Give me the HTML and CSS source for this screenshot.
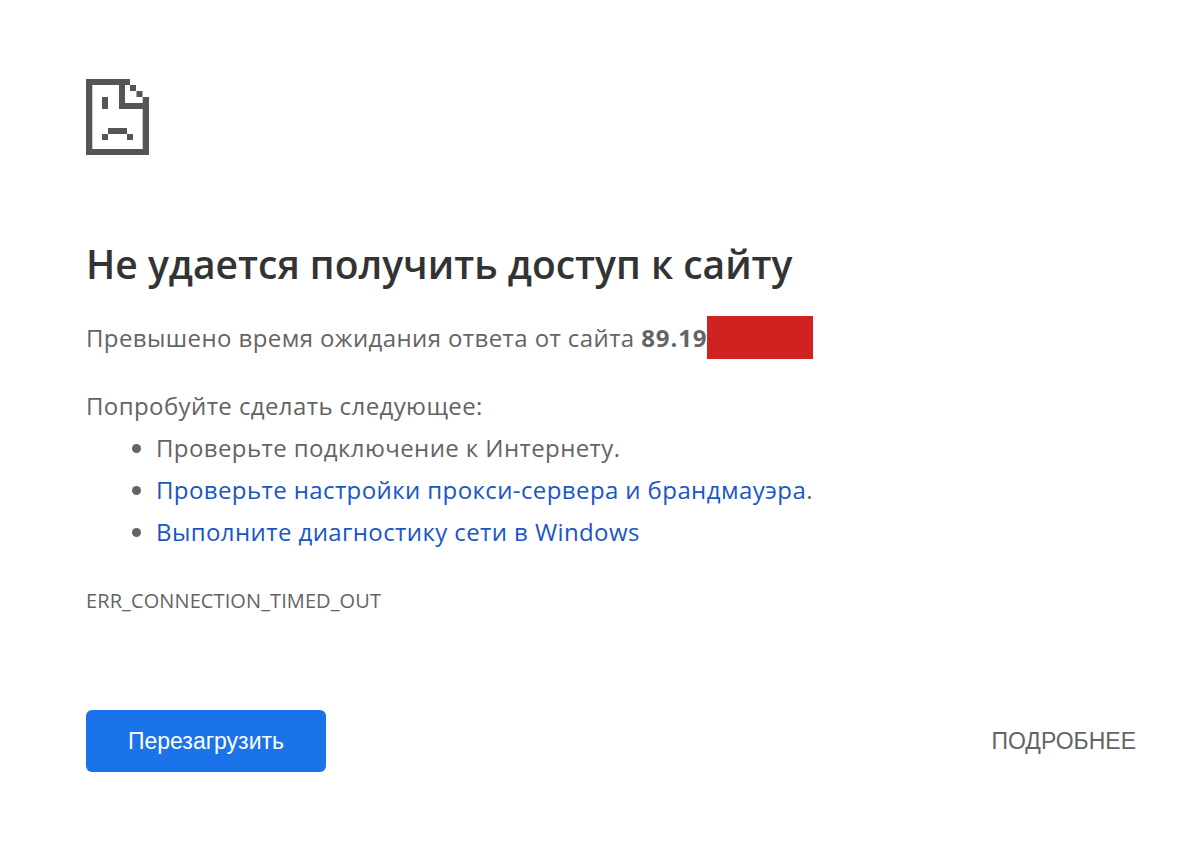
FILE: index.html
```html
<!DOCTYPE html>
<html lang="ru">
<head>
  <meta charset="UTF-8">
  <title>Не удается получить доступ к сайту</title>
  <link rel="stylesheet" href="styles.css">
</head>
<body>
  <div class="error-page">
    <svg class="sad-file" width="63" height="76" viewBox="0 0 63 76" fill="#555" aria-hidden="true">
      <path d="M0 0H44V6H6.300V70H56.700V18H63V76H0Z"/>
      <path d="M33 6H39V24H63V30H33Z"/>
      <rect x="44" y="6" width="6" height="6"/>
      <rect x="50.500" y="12" width="6" height="6"/>
      <rect x="16" y="18" width="6" height="12"/>
      <path d="M22 49H41V55H47V61H41V55H22V61H16V55H22Z"/>
    </svg>

    <h1 class="error-title">Не удается получить доступ к сайту</h1>

    <p class="error-summary">Превышено время ожидания ответа от сайта <strong>89.19</strong><span class="redacted"></span></p>

    <p class="suggest-intro">Попробуйте сделать следующее:</p>
    <ul class="suggest-list">
      <li>Проверьте подключение к Интернету.</li>
      <li><a href="#">Проверьте настройки прокси-сервера и брандмауэра</a>.</li>
      <li><a href="#">Выполните диагностику сети в Windows</a></li>
    </ul>

    <div class="error-code">ERR_CONNECTION_TIMED_OUT</div>

    <div class="button-row">
      <button type="button" class="reload-button">Перезагрузить</button>
      <button type="button" class="details-button">ПОДРОБНЕЕ</button>
    </div>
  </div>
</body>
</html>
```

FILE: styles.css
```css
body {
  margin: 0;
  background: #ffffff;
  color: #646464;
  font-family: "Open Sans", "Noto Sans", sans-serif;
  font-size: 24px;
  letter-spacing: 0.4px;
}

.error-page {
  padding: 79px 68px 0 86px;
}

.sad-file {
  display: block;
}

.error-title {
  margin: 78px 0 0;
  color: #333333;
  font-size: 39px;
  font-weight: 600;
  letter-spacing: 0;
  line-height: 62px;
}

.error-summary {
  margin: 21px 0 0;
  height: 43px;
  line-height: 43px;
}

.error-summary strong {
  font-weight: 700;
  letter-spacing: 0.9px;
}

.redacted {
  display: inline-block;
  width: 106px;
  height: 43px;
  background: #d12222;
  vertical-align: top;
}

.suggest-intro {
  margin: 26px 0 0;
  line-height: 42px;
}

.suggest-list {
  margin: 0;
  padding: 0 0 0 70px;
}

.suggest-list li {
  line-height: 42px;
}

.suggest-list a {
  color: #1a56c4;
  text-decoration: none;
}

.error-code {
  margin-top: 34px;
  font-size: 20px;
  letter-spacing: 0.1px;
  line-height: 28px;
}

.button-row {
  display: flex;
  justify-content: space-between;
  align-items: center;
  margin-top: 95px;
}

.reload-button {
  width: 240px;
  height: 62px;
  border: none;
  border-radius: 6px;
  background: #1a73e8;
  color: #ffffff;
  font-family: "Liberation Sans", sans-serif;
  font-size: 23px;
}

.details-button {
  padding: 0;
  border: none;
  background: none;
  color: #646464;
  font-family: "Liberation Sans", sans-serif;
  font-size: 23px;
}
```
